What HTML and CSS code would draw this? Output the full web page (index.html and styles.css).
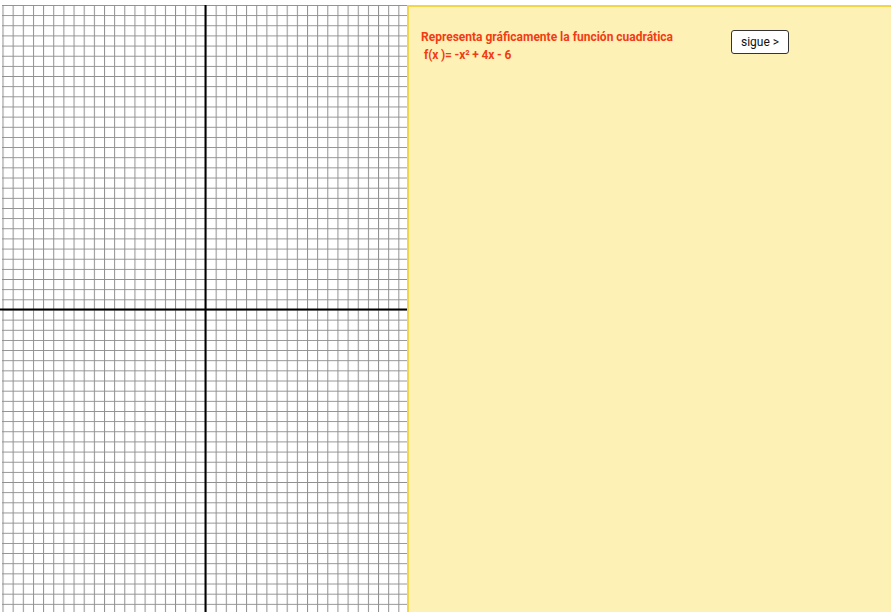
FILE: index.html
```html
<!DOCTYPE html>
<html>
<head>
<meta charset="utf-8">
<link rel="stylesheet" href="styles.css">
</head>
<body>
<div class="app">
  <svg class="graph" width="408" height="607" viewBox="0 0 408 607">
    <defs>
      <pattern id="grid" x="2.5" y="0" width="10.15" height="10.15" patternUnits="userSpaceOnUse">
        <path d="M0.5 0 V10.15 M0 0.5 H10.15" stroke="#8f8f8f" stroke-width="1" fill="none"/>
      </pattern>
    </defs>
    <rect x="0" y="0" width="408" height="607" fill="#fff"/>
    <rect x="2" y="0" width="406" height="607" fill="url(#grid)"/>
    <line x1="205.5" y1="0" x2="205.5" y2="607" stroke="#000" stroke-width="2"/>
    <line x1="0" y1="304.5" x2="408" y2="304.5" stroke="#000" stroke-width="2"/>
  </svg>
  <div class="panel">
    <div class="texts">
      <p class="line1">Representa gráficamente la función cuadrática</p>
      <p class="line2">f(x )= -x² + 4x - 6</p>
    </div>
    <button class="btn">sigue &gt;</button>
  </div>
</div>
</body>
</html>
```
FILE: styles.css
```css
html, body {
  margin: 0;
  padding: 0;
  background: #fff;
}
.app {
  display: flex;
  width: 892px;
  height: 612px;
  align-items: flex-start;
}
.graph {
  display: block;
  margin-top: 5px;
  flex: none;
}
.panel {
  flex: none;
  width: 482px;
  height: 605px;
  margin-top: 5px;
  margin-left: -1px;
  background: #fef1b6;
  border-top: 2px solid #f3d54a;
  border-left: 2px solid #f3d54a;
  display: flex;
  align-items: flex-start;
  font-family: Roboto, "Liberation Sans", sans-serif;
}
.texts {
  padding-top: 21px;
  padding-left: 12px;
  width: 310px;
}
.texts p {
  margin: 0;
  color: #f23c14;
  font-weight: 700;
  font-size: 12px;
  line-height: 18px;
}
.line2 {
  padding-left: 3px;
  letter-spacing: -0.15px;
}
.btn {
  margin-top: 23px;
  margin-left: 0;
  width: 58px;
  height: 24px;
  padding: 0;
  background: #fff;
  border: 1px solid #333;
  border-radius: 3px;
  font-family: Roboto, "Liberation Sans", sans-serif;
  font-size: 12px;
  color: #111;
}
```
